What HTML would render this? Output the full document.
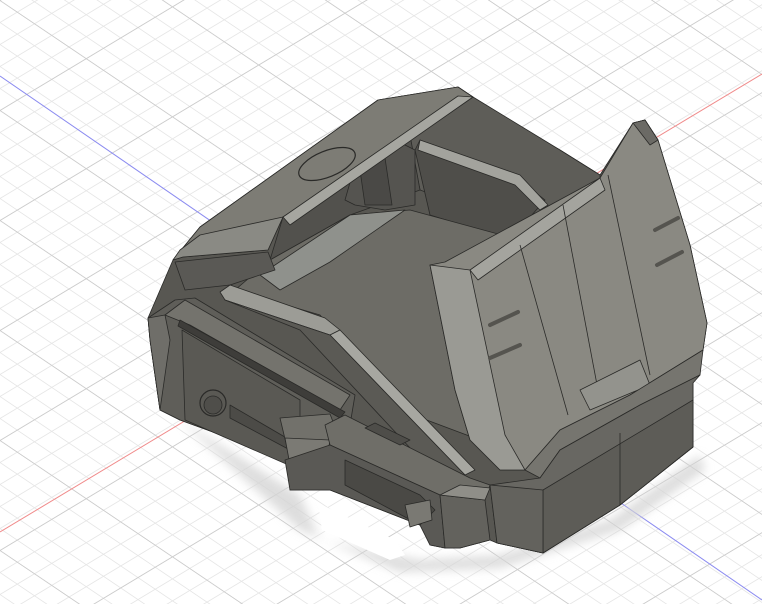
<!DOCTYPE html>
<html><head><meta charset="utf-8"><style>
html,body{margin:0;padding:0;background:#fff;width:762px;height:604px;overflow:hidden}
svg{display:block}
</style></head><body>
<svg width="762" height="604" viewBox="0 0 762 604" xmlns="http://www.w3.org/2000/svg">
<defs>
<pattern id="gA" width="762" height="22" patternUnits="userSpaceOnUse" patternTransform="skewY(-31)">
<line x1="0" y1="0.5" x2="762" y2="0.5" stroke="#e6e6e6" stroke-width="1"/>
</pattern>
<pattern id="gB" width="762" height="22" patternUnits="userSpaceOnUse" patternTransform="skewY(34)">
<line x1="0" y1="0.5" x2="762" y2="0.5" stroke="#e6e6e6" stroke-width="1"/>
</pattern>
<pattern id="gA2" width="762" height="110" patternUnits="userSpaceOnUse" patternTransform="skewY(-31)">
<line x1="0" y1="0.5" x2="762" y2="0.5" stroke="#cccccc" stroke-width="1"/>
</pattern>
<pattern id="gB2" width="762" height="110" patternUnits="userSpaceOnUse" patternTransform="skewY(34)">
<line x1="0" y1="0.5" x2="762" y2="0.5" stroke="#cccccc" stroke-width="1"/>
</pattern>
<filter id="bl"><feGaussianBlur stdDeviation="5"/></filter>
</defs>
<rect width="762" height="604" fill="#fff"/>
<rect width="762" height="604" fill="url(#gA)"/>
<rect width="762" height="604" fill="url(#gB)"/>
<rect width="762" height="604" fill="url(#gA2)"/>
<rect width="762" height="604" fill="url(#gB2)"/>
<line x1="0" y1="532" x2="762" y2="74" stroke="#f08a8a" stroke-width="1"/>
<line x1="0" y1="76" x2="762" y2="600" stroke="#8a8af0" stroke-width="1"/>

<!-- shadow -->
<path d="M180,420 L300,495 L320,540 L420,560 L500,555 L610,520 L700,455 L705,470 L620,530 L500,568 L400,572 L300,530 Z" fill="#d4d4d4" filter="url(#bl)" opacity="0.8"/>
<path d="M318,503 L395,540 L405,555 L390,560 L322,530 Z" fill="#fff"/>

<g stroke="#2a2a28" stroke-width="0.8" stroke-linejoin="round">
<!-- base silhouette -->
<path d="M148,318 L173,260 L200,227 L378,100 L458,87 L473,97 L482,108 L560,150 L600,175 L633,123 L645,120 L658,140 L690,245 L707,323 L703,350 L693,383 L693,447 L620,505 L543,553 L497,543 L490,540 L460,548 L445,548 L430,545 L420,525 L330,490 L290,490 L290,460 L180,420 L160,410 L150,340 Z" fill="#585752"/>
<!-- back wall interior right -->
<path d="M410,140 L473,97 L560,150 L600,175 L600,200 L530,230 L420,190 Z" fill="#5e5d58"/>
<path d="M415,150 L420,140 L520,180 L545,200 L510,240 L430,215 Z" fill="#4f4e4a"/>
<path d="M420,140 L520,175 L548,205 L540,210 L515,185 L418,150 Z" fill="#a3a39d"/>
<!-- back wall left -->
<path d="M283,217 L410,135 L420,190 L350,215 L270,260 Z" fill="#52514d"/>
<!-- interior floor -->
<path d="M235,290 L270,260 L350,215 L410,210 L520,240 L560,290 L480,440 L400,410 L320,315 Z" fill="#6d6c66"/>
<path d="M260,275 L350,215 L405,210 L330,262 L280,290 Z" fill="#8f918c"/>
<!-- cylinder -->
<path d="M345,200 L355,165 L395,140 L415,150 L415,205 L385,210 L355,205 Z" fill="#555450"/>
<path d="M360,170 L385,158 L392,205 L365,205 Z" fill="#4a4946"/>
<!-- back lid -->
<path d="M200,227 L378,100 L458,87 L473,97 L410,135 L283,217 L268,250 L183,257 L173,260 Z" fill="#7d7c75"/>
<path d="M173,260 L183,257 L268,250 L283,217 L200,235 L180,250 Z" fill="#8a8a84"/>
<path d="M283,217 L458,96 L473,97 L290,225 Z" fill="#a6a6a0"/>
<ellipse cx="327" cy="164" rx="30" ry="13" transform="rotate(-22 327 164)" fill="none" stroke="#2a2a28" stroke-width="1.2"/>
<path d="M175,262 L268,252 L275,270 L230,285 L185,290 Z" fill="#5a5955"/>
<!-- left inner rail -->
<path d="M220,292 L230,285 L325,318 L340,330 L330,335 L225,300 Z" fill="#9c9c96"/>
<path d="M330,335 L340,330 L475,470 L465,475 Z" fill="#a7a7a1"/>
<path d="M225,300 L330,335 L465,475 L440,480 L300,330 Z" fill="#5b5a55"/>

<!-- right plate -->
<path d="M430,265 L445,262 L600,178 L633,123 L645,120 L658,140 L690,245 L707,323 L703,350 L630,395 L560,430 L525,470 L500,470 L470,440 L455,390 Z" fill="#8a8982"/>
<path d="M430,265 L470,270 L505,435 L525,470 L500,470 L470,440 L455,390 Z" fill="#9a9a94"/>
<path d="M470,270 L600,178 L605,190 L478,280 Z" fill="#a4a49e"/>
<path d="M633,123 L645,120 L658,140 L650,145 Z" fill="#6b6a65"/>
<path d="M520,245 L568,415" fill="none"/>
<path d="M563,205 L598,390" fill="none"/>
<path d="M608,175 L650,375" fill="none"/>
<path d="M580,390 L640,360 L650,385 L590,410 Z" fill="#93938d"/>
<path d="M490,325 L518,312 M490,358 L520,345 M655,230 L678,218 M657,265 L682,252" stroke-width="4" stroke="#55544f" stroke-linecap="round"/>
<path d="M525,470 L560,430 L630,395 L703,350 L700,375 L640,405 L560,450 L540,478 Z" fill="#76756f"/>
<!-- right lower box -->
<path d="M490,485 L540,478 L560,450 L640,405 L700,375 L693,383 L693,447 L620,505 L543,553 L497,543 Z" fill="#686762"/>
<path d="M543,490 L693,400 L693,447 L620,505 L543,553 Z" fill="#5d5c57"/>
<path d="M620,433 L620,505" fill="none"/>
<path d="M490,485 L543,490 L543,553 L497,543 Z" fill="#63625d"/>

<!-- left front block -->
<path d="M148,318 L175,300 L195,298 L355,395 L350,425 L300,420 L290,460 L180,420 L160,410 L150,340 Z" fill="#5f5e59"/>
<path d="M148,318 L165,315 L170,340 L160,410 L150,340 Z" fill="#6f6e69"/>
<path d="M165,315 L185,300 L350,395 L340,410 L190,325 Z" fill="#74736d"/>
<path d="M180,320 L345,412 L340,418 L178,326 Z" fill="#3e3d3a"/>
<path d="M182,330 L300,400 L300,470 L185,420 Z" fill="#5a5954"/>
<circle cx="213" cy="403" r="13" fill="#5a5954" stroke-width="1.2"/>
<circle cx="213" cy="405" r="9" fill="#4f4e4a"/>
<path d="M230,405 L290,440 L290,450 L230,418 Z" fill="#4c4b47"/>
<!-- middle connector -->
<path d="M280,418 L330,414 L340,440 L320,465 L290,460 Z" fill="#72716b"/>
<path d="M285,438 L330,440 L325,470 L290,465 Z" fill="#7b7a74"/>
<!-- front lower block -->
<path d="M325,425 L345,415 L470,478 L490,485 L485,500 L440,495 L330,445 Z" fill="#6f6e68"/>
<path d="M365,428 L375,423 L410,440 L400,445 Z" fill="#4e4d49"/>
<path d="M330,445 L440,495 L445,548 L430,545 L420,525 L330,490 L290,490 L285,460 Z" fill="#5a5955"/>
<path d="M345,460 L420,495 L435,510 L420,525 L345,485 Z" fill="#4a4945"/>
<path d="M405,505 L430,500 L432,520 L410,527 Z" fill="#7a7973"/>
<path d="M440,495 L485,500 L490,540 L460,548 L445,548 Z" fill="#63625d"/>
<path d="M440,495 L460,485 L490,488 L485,500 Z" fill="#8f8e88"/>
</g>
</svg>
</body></html>
